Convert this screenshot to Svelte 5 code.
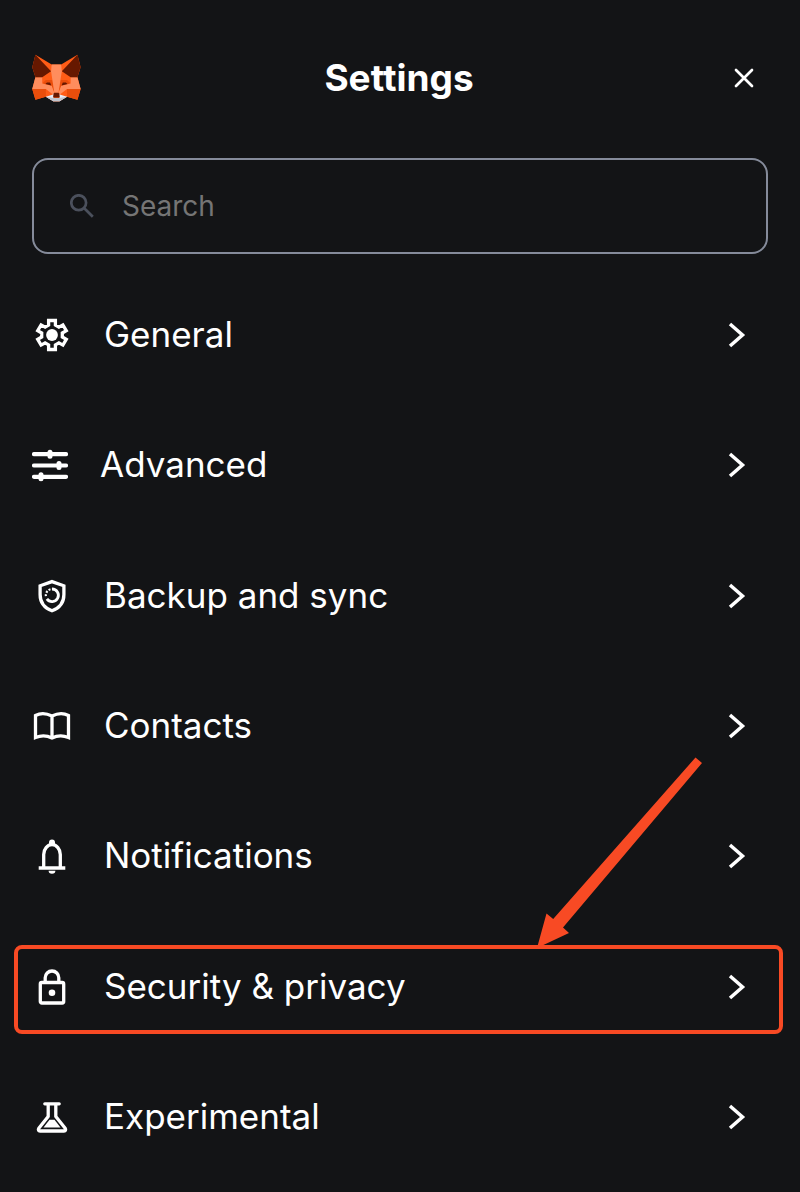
<script>
  const items = [
    { label: 'General', icon: 'gear' },
    { label: 'Advanced', icon: 'sliders' },
    { label: 'Backup and sync', icon: 'shield' },
    { label: 'Contacts', icon: 'book' },
    { label: 'Notifications', icon: 'bell' },
    { label: 'Security & privacy', icon: 'lock', marked: true },
    { label: 'Experimental', icon: 'flask' }
  ];
  let query = $state('');
</script>

{#snippet foxHalf()}
  <path fill="#ea4e0c" d="M41.1 123.2 10.9 132.2 1.7 101.2H41.1ZM60.2 75.1 65.9 112.5 57.9 91.7 30.7 84.9 41.1 75.1Z" />
  <path fill="#ff8d5d" d="M1.7 101.2 10.9 66.8H30.6L30.7 84.9 57.9 91.7 65.9 112.5 61.8 117 41.1 101.2Z" />
  <path fill="#661800" d="M10.9 1.7 1.7 37.7 10.9 66.8H30.6L56.2 49.2ZM53.4 81.9H44.4L39.6 86.7 56.9 91Z" />
  <path fill="#e7ebf6" d="M41.1 123.2 63.8 136.8 63.2 125.2 65.9 112.5 61.8 117Z" />
{/snippet}

<main>
  <header>
    <svg class="logo" viewBox="1 0 142 138" role="img" aria-label="MetaMask">
      <path fill="#ff5c16" d="M132.7 132.2 102.5 123.2 79.7 136.8H63.8L41.1 123.2 10.9 132.2 1.7 101.2 10.9 66.8 1.7 37.7 10.9 1.7 58 29.8H85.5L132.7 1.7 141.9 37.7 132.7 66.8 141.9 101.2Z" />
      {@render foxHalf()}
      <g transform="translate(143.6 0) scale(-1 1)">{@render foxHalf()}</g>
      <path fill="#ff8d5d" d="M85.5 29.8H58L56.2 49.2 65.9 112.5H77.7L87.4 49.2Z" />
      <path fill="#c0c4cd" d="M63.8 136.8H79.7L102.5 123.2 80 127H63.6L41.1 123.2Z" />
      <path fill="#661800" d="M65.9 111.5H77.7L80.4 114.5 81.2 124 79.7 125.2H63.8L62.4 124 63.2 114.5Z" />
    </svg>
    <h1>Settings</h1>
    <button class="close" aria-label="Close">
      <svg viewBox="0 0 24 24"><path d="m4 4 16 16M20 4 4 20" fill="none" stroke="currentColor" stroke-width="2.7" stroke-linecap="round" /></svg>
    </button>
  </header>

  <label class="search">
    <svg viewBox="0 0 24 24" aria-hidden="true">
      <circle cx="8.7" cy="8.7" r="7.4" /><path d="m14 14 8.8 8.8" />
    </svg>
    <input type="text" placeholder="Search" aria-label="Search" bind:value={query} />
  </label>

  <nav>
    {#each items as item}
      <button class="row">
        {#if item.icon === 'gear'}
          <svg class="icon" viewBox="0 0 40 40">
            <path class="line" d="m16.6 5.5h6.8v4.6l3.5 2 4-2.2 3.4 5.800-4 2.300v4l4 2.300-3.400 5.800-4-2.200-3.500 2v4.600h-6.800v-4.600l-3.500-2-4 2.200-3.400-5.800 4-2.300v-4l-4-2.300 3.400-5.800 4 2.200 3.500-2Z" />
            <circle cx="20" cy="20" r="5.9" fill="currentColor" />
          </svg>
        {:else if item.icon === 'sliders'}
          <svg class="icon narrow" viewBox="0 0 36 40">
            <path d="M2 9.2H34M2 20.5H34M2 31.8H34" fill="none" stroke="currentColor" stroke-width="4.2" stroke-linecap="round" />
            <path d="M18 7.2V11.2M27 18.5V22.5M9 29.8V33.8" fill="none" stroke="currentColor" stroke-width="5" stroke-linecap="round" />
          </svg>
        {:else if item.icon === 'shield'}
          <svg class="icon" viewBox="0 0 40 40">
            <path class="line" d="M20 5.6 31.9 9.8V18.5C31.9 27 27 32.2 20 34.7 13 32.2 8.1 27 8.1 18.5V9.8Z" />
            <path d="M20 13A6.300 6.300 0 1 1 14.900 22.900" fill="none" stroke="currentColor" stroke-width="2.800" />
            <path d="M13.900 20.200A6.300 6.300 0 0 1 20 13" fill="none" stroke="currentColor" stroke-width="2.200" stroke-dasharray="2 1.500" />
          </svg>
        {:else if item.icon === 'book'}
          <svg class="icon" viewBox="0 0 40 40">
            <path class="line" d="M20 10Q11 5.500 3.500 9.500V31.500Q12 28 20 32 28 28 36.500 31.500V9.500Q29 5.500 20 10ZM20 10V32" />
          </svg>
        {:else if item.icon === 'bell'}
          <svg class="icon" viewBox="0 0 40 40">
            <path class="line" d="M11.700 32V18.500A8.300 9.800 0 0 1 28.300 18.500V32M6.700 32H33.300" />
            <path fill="currentColor" d="M17 9V6.500A3 3 0 0 1 23 6.500V9ZM16.600 34.700H23.400A3.400 3 0 0 1 16.600 34.700Z" />
          </svg>
        {:else if item.icon === 'lock'}
          <svg class="icon" viewBox="0 0 40 40">
            <rect class="line" x="8.300" y="15.500" width="23.400" height="20.500" rx="1.500" />
            <path class="line" d="M13.200 15V10.800A6.800 6.800 0 0 1 26.800 10.800V15" />
            <circle cx="20" cy="25.700" r="3.300" fill="currentColor" />
          </svg>
        {:else}
          <svg class="icon" viewBox="0 0 40 40">
            <path class="line" d="M12.800 6.800H27.200M16.200 6.800V19.500L6.800 31.200Q5.500 33.700 8.200 34H31.800Q34.500 33.700 33.200 31.200L23.800 19.500V6.800" stroke-linecap="round" stroke-linejoin="round" />
            <path fill="currentColor" d="M17.500 22.800H22.500L28.500 30.500H11.500Z" />
          </svg>
        {/if}
        <span class="label">{item.label}</span>
        <svg class="chevron" viewBox="0 0 18 28"><path d="m2 3 12.500 11L2 25" fill="none" stroke="currentColor" stroke-width="3.500" /></svg>
        {#if item.marked}
          <span class="marker">
            <svg class="arrow" viewBox="0 0 166 192">
              <path fill="#f84a24" d="M0 191 9.500 156.500 16.200 162 158.500 0.500 165 6 26 170.500 32 176Z" />
            </svg>
          </span>
        {/if}
      </button>
    {/each}
  </nav>
</main>

<style>
  :global(body) {
    margin: 0;
    background: #131416;
  }
  main {
    box-sizing: border-box;
    min-height: 100vh;
    padding: 46px 32px 10px;
    display: flex;
    flex-direction: column;
    overflow: hidden;
    color: #fff;
    background: #131416;
    font-family: Inter, "Liberation Sans", sans-serif;
  }
  header {
    display: grid;
    grid-template-columns: 50px 1fr 48px;
    align-items: center;
    height: 64px;
    margin-bottom: 48px;
  }
  .logo {
    width: 49px;
    height: 48px;
  }
  h1 {
    margin: 0;
    padding-right: 4px;
    text-align: center;
    font-size: 37px;
    line-height: 48px;
    font-weight: 700;
  }
  button {
    padding: 0;
    border: 0;
    color: inherit;
    background: none;
    font: inherit;
    cursor: pointer;
  }
  .close {
    display: flex;
    justify-content: center;
    width: 48px;
    height: 24px;
  }
  .close svg {
    width: 24px;
    height: 24px;
  }
  .search {
    box-sizing: border-box;
    display: flex;
    align-items: center;
    gap: 28px;
    height: 96px;
    margin-bottom: 16px;
    padding: 0 36px;
    border: 2px solid #858b9a;
    border-radius: 16px;
  }
  .search svg {
    flex: none;
    width: 24px;
    height: 24px;
    fill: none;
    stroke: #4b505c;
    stroke-width: 2.7;
  }
  input {
    flex: 1;
    min-width: 0;
    padding: 0;
    border: 0;
    outline: 0;
    color: #fff;
    background: none;
    font: 400 28px/40px Inter, "Liberation Sans", sans-serif;
  }
  input::placeholder {
    color: #757575;
    opacity: 1;
  }
  nav {
    flex: 1;
    display: flex;
    flex-direction: column;
  }
  .row {
    position: relative;
    flex: 1;
    min-height: 96px;
    display: flex;
    align-items: center;
    gap: 32px;
    padding-right: 22px;
    text-align: left;
  }
  .icon {
    flex: none;
    width: 40px;
    height: 40px;
  }
  .narrow {
    width: 36px;
  }
  .line {
    fill: none;
    stroke: currentColor;
    stroke-width: 3.3;
  }
  .label {
    flex: 1;
    padding-bottom: 2px;
    font-size: 35px;
    line-height: 48px;
  }
  .chevron {
    flex: none;
    width: 18px;
    height: 28px;
  }
  .marker {
    position: absolute;
    inset: 24px -15px 18px -18px;
    border: 4px solid #f84a24;
    border-radius: 8px;
    pointer-events: none;
  }
  .arrow {
    position: absolute;
    right: 76px;
    bottom: 100%;
    width: 166px;
    height: 192px;
  }
</style>
